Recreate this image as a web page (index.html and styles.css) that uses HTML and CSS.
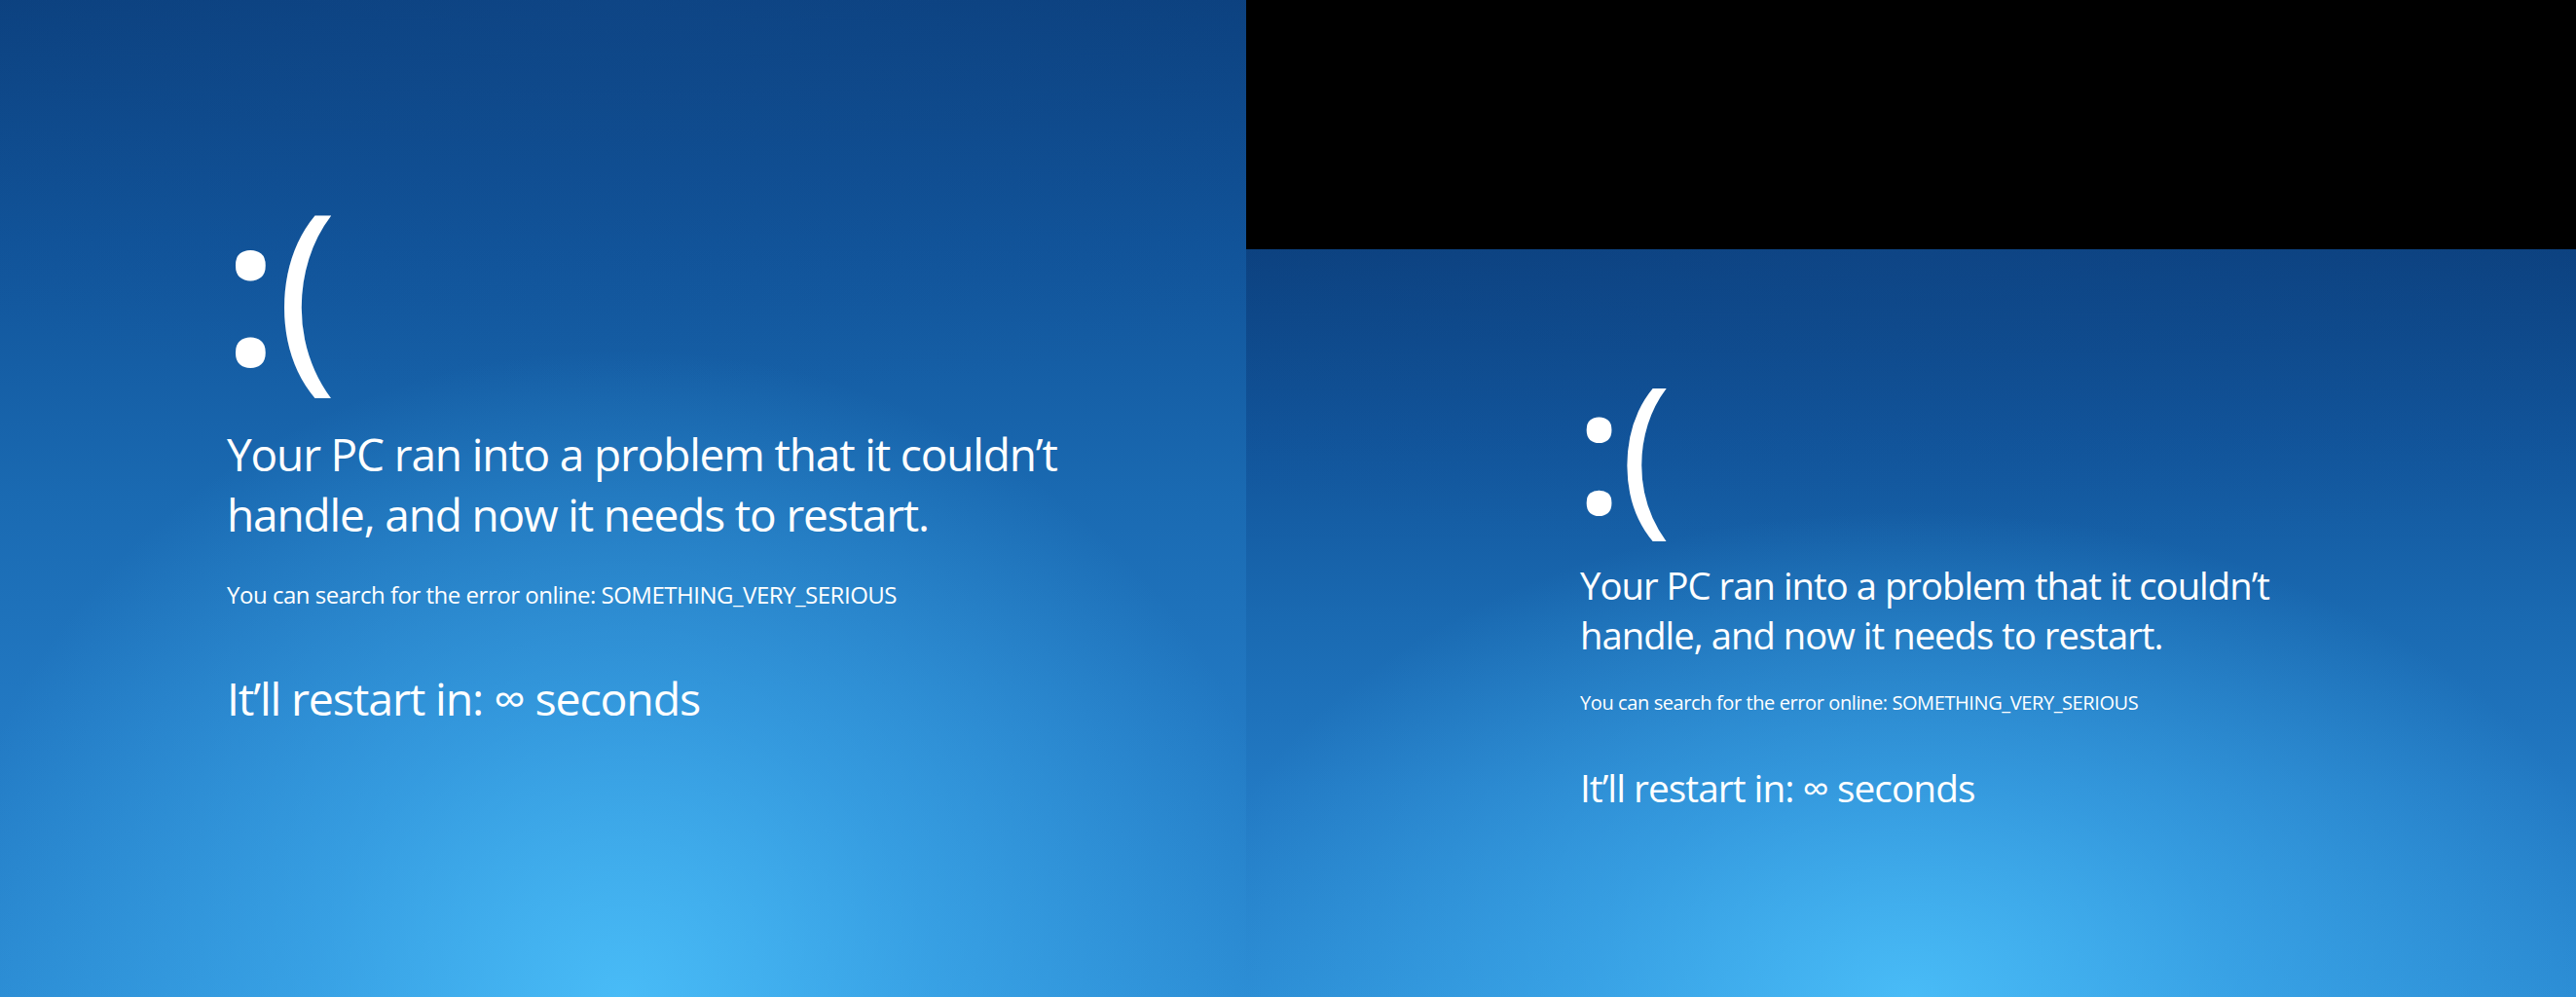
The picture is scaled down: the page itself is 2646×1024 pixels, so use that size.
FILE: index.html
```html
<!DOCTYPE html>
<html lang="en">
<head>
<meta charset="utf-8">
<title>Your PC ran into a problem</title>
<link rel="stylesheet" href="styles.css">
</head>
<body class="screen">
  <section class="panel panel-large">
    <div class="bsod">
      <div class="face"><span class="eyes">:</span><span class="mouth">(</span></div>
      <p class="msg">Your PC ran into a problem that it couldn’t<br>handle, and now it needs to restart.</p>
      <p class="code">You can search for the error online: SOMETHING_VERY_SERIOUS</p>
      <p class="restart">It’ll restart in: ∞ seconds</p>
    </div>
  </section>
  <div class="side">
    <div class="letterbox"></div>
    <section class="panel panel-small">
      <div class="bsod">
        <div class="face"><span class="eyes">:</span><span class="mouth">(</span></div>
        <p class="msg">Your PC ran into a problem that it couldn’t<br>handle, and now it needs to restart.</p>
        <p class="code">You can search for the error online: SOMETHING_VERY_SERIOUS</p>
        <p class="restart">It’ll restart in: ∞ seconds</p>
      </div>
    </section>
  </div>
</body>
</html>
```

FILE: styles.css
```css
html, body {
  margin: 0;
  padding: 0;
}

.screen {
  width: 2646px;
  height: 1024px;
  display: flex;
  background: #000;
  overflow: hidden;
  font-family: "Open Sans", "Noto Sans", "Liberation Sans", sans-serif;
  color: #fff;
}

.panel {
  background:
    radial-gradient(ellipse 55% 65% at 50% 100%, rgba(78, 196, 253, 0.85) 0%, rgba(70, 185, 248, 0.5) 45%, rgba(60, 170, 240, 0) 100%),
    radial-gradient(ellipse 90% 40% at 50% 0%, rgba(20, 80, 150, 0.35) 0%, rgba(20, 80, 150, 0) 100%),
    linear-gradient(to bottom, #0b3f7c 0%, #11549a 25%, #1a6ab2 50%, #2279c3 72%, #2a8ad2 100%);
  background-color: #1a6ab2;
  display: flex;
  flex-direction: column;
}

.panel-large {
  width: 1280px;
  height: 1024px;
  flex: none;
}

.side {
  flex: 1;
  display: flex;
  flex-direction: column;
}

.letterbox {
  height: 256px;
  background: #000;
}

.panel-small {
  flex: 1;
}

.bsod p {
  margin: 0;
}

.face {
  line-height: 1;
  font-weight: 400;
  white-space: nowrap;
}

.eyes {
  font-weight: 600;
  letter-spacing: -0.015em;
}

.msg,
.restart {
  font-weight: 400;
  letter-spacing: -0.025em;
}

.code {
  font-weight: 400;
  letter-spacing: -0.02em;
}

/* large panel (1280 x 1024) */
.panel-large .bsod {
  padding: 185px 0 0 233px;
}
.panel-large .face {
  font-size: 214px;
  margin-left: -5px;
}
.panel-large .msg {
  margin-top: 36px;
  font-size: 46px;
  line-height: 62px;
}
.panel-large .code {
  margin-top: 37px;
  font-size: 24px;
  line-height: 30px;
}
.panel-large .restart {
  margin-top: 60px;
  font-size: 46.5px;
  line-height: 62px;
}

/* small panel (1366 x 768) */
.panel-small .bsod {
  padding: 113px 0 0 343px;
}
.panel-small .face {
  font-size: 179px;
  margin-left: -5px;
}
.panel-small .msg {
  margin-top: 28px;
  font-size: 38.2px;
  line-height: 51px;
}
.panel-small .code {
  margin-top: 31px;
  font-size: 20px;
  line-height: 25px;
}
.panel-small .restart {
  margin-top: 50px;
  font-size: 38.8px;
  line-height: 51px;
}
```
